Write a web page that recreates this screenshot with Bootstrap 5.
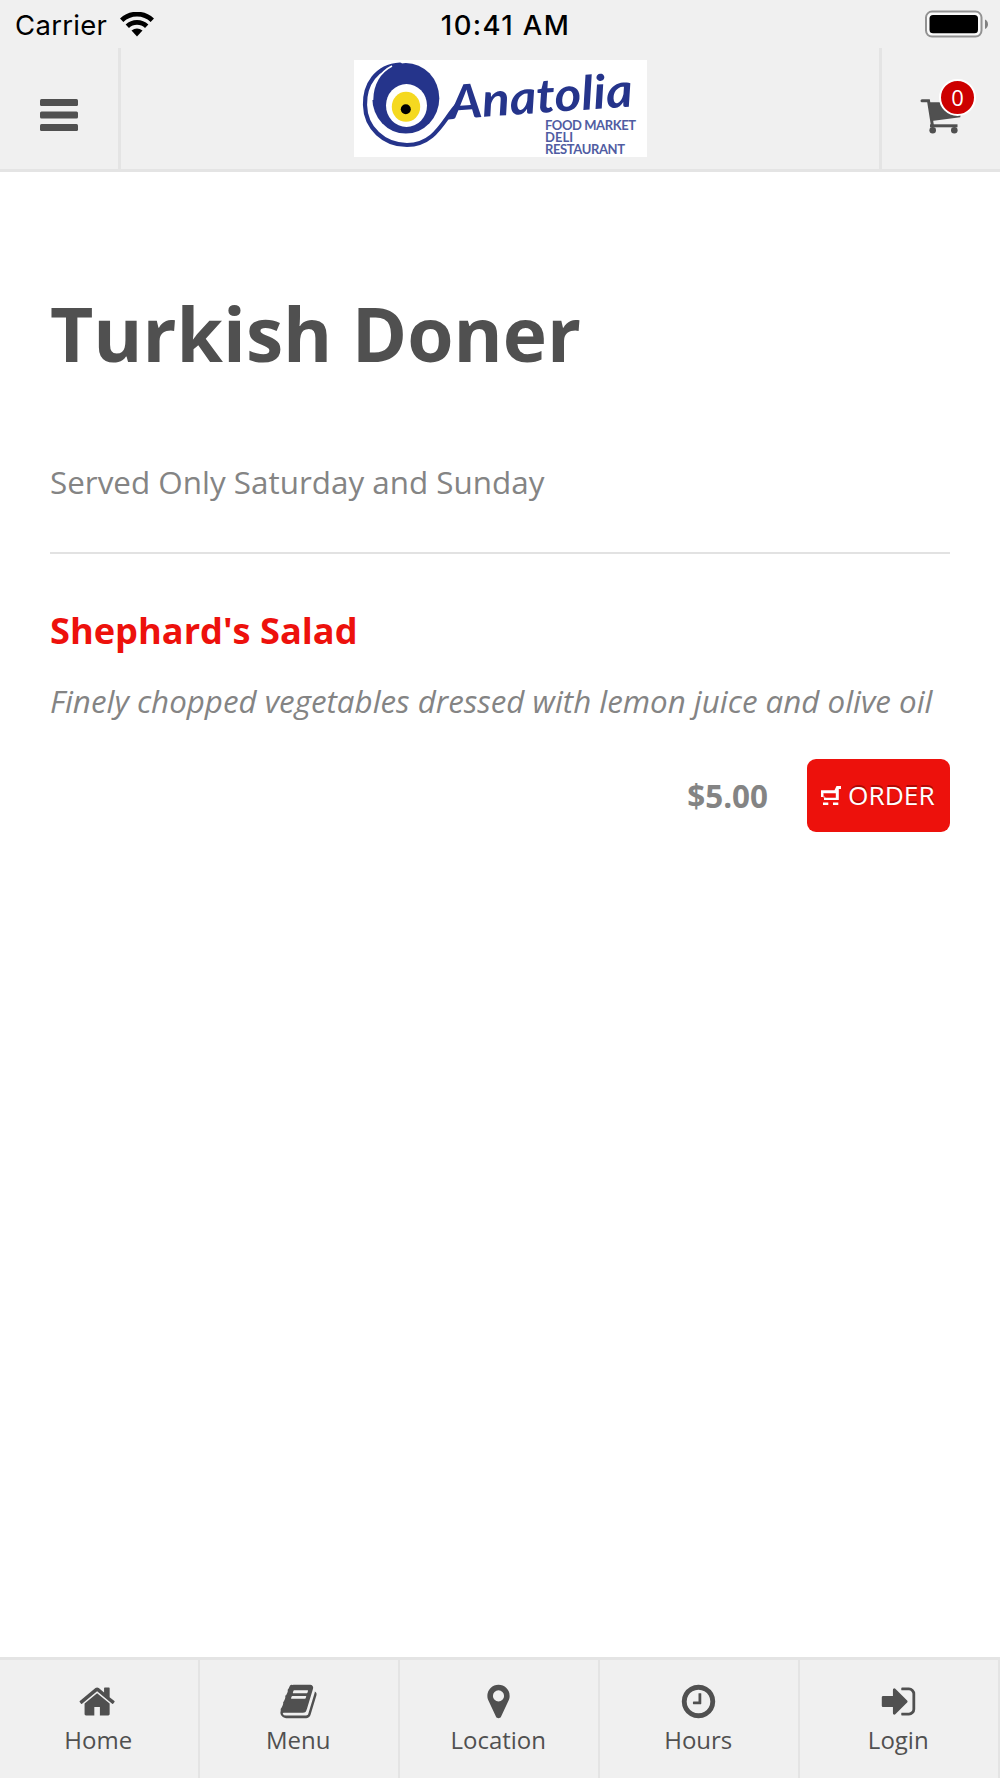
<!DOCTYPE html>
<html lang="en">
<head>
<meta charset="utf-8">
<meta name="viewport" content="width=device-width, initial-scale=1">
<title>Anatolia - Turkish Doner</title>
<link href="https://cdn.jsdelivr.net/npm/bootstrap@5.3.0/dist/css/bootstrap.min.css" rel="stylesheet">
<style>
  body { font-family: "Open Sans", sans-serif; color: #505050; background: #fff; }
  .app-screen { height: 1778px; overflow: hidden; }
  .bar-bg { background: #f0f0f0; }
  svg { display: block; }
  .status-bar { height: 48px; padding: 0 12px 0 15px; font-family: "Inter", sans-serif; font-size: 27.5px; line-height: 51px; color: #000; }
  .status-side { flex: 1 1 0; }
  .carrier-name { letter-spacing: .3px; }
  .wifi-icon { margin: 12px 0 0 13px; }
  .clock-text { font-weight: 500; margin-left: 8px; letter-spacing: 1.4px; }
  .app-header { height: 124px; border-bottom: 3px solid #e4e4e4; }
  .header-side { width: 121px; }
  .header-left { border-right: 3px solid #e4e4e4; padding: 51px 0 0 40px; }
  .header-right { border-left: 3px solid #e4e4e4; padding: 50px 0 0 38px; }
  .brand-logo { margin-top: 12px; }
  .cart-count { top: 31px; left: 57px; width: 37px; height: 37px; border: 2.5px solid #fff; background: #cd0000; font-size: 22px; line-height: 33px; font-weight: 400; padding: 0; color: #fff; }
  .page-title { font-size: 74.9px; line-height: 90px; font-weight: 700; margin: 0 0 83px; }
  .page-main { padding: 116px 50px 0; }
  .note-text { font-size: 31.4px; line-height: 42px; color: #848484; margin: 0 0 49px; }
  .rule-line { height: 2px; background: #e2e2e2; }
  .dish-name { font-size: 36.2px; line-height: 48px; font-weight: 700; color: #ed110c; margin: 52px 0 26px; }
  .dish-text { font-size: 31.3px; line-height: 42px; font-style: italic; color: #848484; margin: 0 0 37px; white-space: nowrap; }
  .dish-price { font-size: 31.4px; font-weight: 700; color: #848484; margin-right: 39px; }
  .btn-order, .btn-order:hover { width: 143px; height: 73px; border: 0; border-radius: 9px; background: #ed110c; color: #fff; font-size: 26.3px; padding: 0 0 0 14px; text-shadow: 0 -2px 0 rgba(90,0,0,.45); }
  .order-icon { margin-right: 7px; }
  .tab-bar { height: 121px; border-top: 3px solid #e4e4e4; }
  .tab-cell { width: 20%; border-right: 2px solid #e4e4e4; padding: 21.5px 1.5px 0 0; color: #505050; font-size: 24px; line-height: 32px; text-decoration: none; }
  .tab-cell svg { width: 39px; height: 39px; margin-bottom: 3px; fill: #505050; }
</style>
<script src="https://cdn.jsdelivr.net/npm/bootstrap@5.3.0/dist/js/bootstrap.bundle.min.js"></script>
</head>
<body>
<div class="app-screen d-flex flex-column">
  <div class="status-bar bar-bg d-flex">
    <div class="status-side d-flex">
      <span class="carrier-name">Carrier</span>
      <svg class="wifi-icon" width="34" height="25" viewBox="0 0 34 25">
        <g fill="none" stroke="#000" stroke-width="4.800"><path d="M1.700 8.300A22 22 0 0 1 32.300 8.300"/><path d="M7.300 14.200A14 14 0 0 1 26.700 14.200"/></g>
        <path d="M11.500 18.600Q17 14.300 22.500 18.600L17 24.500Z"/>
      </svg>
    </div>
    <span class="clock-text">10:41 AM</span>
    <div class="status-side d-flex justify-content-end">
      <svg class="mt-2" width="64" height="32" viewBox="0 0 64 32">
        <rect x="2" y="3.600" width="55.500" height="25" rx="6" fill="#fafafa" stroke="#929292" stroke-width="2"/>
        <rect x="5.500" y="7" width="48.500" height="18.200" rx="3.500"/>
        <path d="M61 11.500Q64 13 64 16.200Q64 19.500 61 21Z" fill="#808080"/>
      </svg>
    </div>
  </div>

  <header class="app-header bar-bg d-flex justify-content-between">
    <div class="header-side header-left">
      <svg width="38" height="32" viewBox="0 0 38 32" fill="#505050"><rect width="38" height="7" rx="1.500"/><rect y="12.500" width="38" height="7" rx="1.500"/><rect y="25" width="38" height="7" rx="1.500"/></svg>
    </div>
    <svg class="brand-logo" width="293" height="97" viewBox="0 0 293 97">
      <rect width="293" height="97" fill="#fff"/>
      <path d="M46 4.500C22 6 10.500 25 11 45C11.500 68 30 85 53 85C82 85 90 58 104 44" fill="none" stroke="#25348b" stroke-width="4.200" stroke-linecap="round"/>
      <ellipse cx="51.800" cy="38.300" rx="33.500" ry="35.300" fill="#25348b"/>
      <path d="M38 6C26 12 18.500 24 18.500 40" fill="none" stroke="#fff" stroke-width="1.600"/>
      <ellipse cx="52.500" cy="45.500" rx="20.500" ry="21.500" fill="#fff"/>
      <ellipse cx="52" cy="46.800" rx="14.200" ry="15" fill="#f5d920"/>
      <circle cx="51.800" cy="49.300" r="5" fill="#000"/>
      <g fill="#25348b" font-family="Lato, sans-serif">
        <text transform="rotate(-4 98 60)" x="96" y="59" textLength="184" lengthAdjust="spacingAndGlyphs" font-size="47" font-weight="700" font-style="italic">Anatolia</text>
        <text font-size="13" font-weight="700" opacity=".8"><tspan x="191" y="70" textLength="91">FOOD MARKET</tspan><tspan x="191" y="82" textLength="28">DELI</tspan><tspan x="191" y="94" textLength="80">RESTAURANT</tspan></text>
      </g>
    </svg>
    <div class="header-side header-right position-relative">
      <svg width="44" height="37" viewBox="0 0 44 37" fill="#505050">
        <path d="M2 2.700H8.500L12.500 28" fill="none" stroke="#505050" stroke-width="3" stroke-linecap="round"/>
        <path d="M8 4.300H42L40.300 19.300L11.700 23Z"/>
        <rect x="10" y="26.300" width="27.500" height="3"/>
        <circle cx="12.700" cy="32.300" r="3.300"/><circle cx="34.300" cy="32.300" r="3.300"/>
      </svg>
      <span class="cart-count badge rounded-circle position-absolute">0</span>
    </div>
  </header>

  <main class="page-main flex-grow-1">
    <h1 class="page-title">Turkish Doner</h1>
    <p class="note-text">Served Only Saturday and Sunday</p>
    <div class="rule-line"></div>
    <h2 class="dish-name">Shephard's Salad</h2>
    <p class="dish-text">Finely chopped vegetables dressed with lemon juice and olive oil</p>
    <div class="d-flex justify-content-end align-items-center">
      <span class="dish-price">$5.00</span>
      <button type="button" class="btn btn-order d-flex align-items-center">
        <svg class="order-icon" width="20" height="20" viewBox="0 0 20 20" fill="#fff">
          <path d="M15.500 0H20V3H17.800V14H3V11.800H14.800V7.300H2.200V11H0V4.300H13.500Z"/>
          <path d="M2.200 7.300V11H4V11.800" fill="none" stroke="#fff" stroke-opacity=".6"/>
          <rect x="2" y="16.500" width="5.300" height="2.500"/><rect x="12" y="16.500" width="5.300" height="2.500"/>
        </svg>
        <span>ORDER</span>
      </button>
    </div>
  </main>

  <nav class="tab-bar bar-bg d-flex text-center">
    <a class="tab-cell d-flex flex-column align-items-center" href="#">
      <svg viewBox="0 0 1792 1792"><path d="M1408 992v480q0 26-19 45t-45 19h-384v-384h-256v384h-384q-26 0-45-19t-19-45v-480q0-1 .5-3t.5-3l575-474 575 474q1 2 1 6zm223-69l-62 74q-8 9-21 11h-3q-13 0-21-7l-692-577-692 577q-12 8-24 7-13-2-21-11l-62-74q-8-10-7-23.500t11-21.500l719-599q32-26 76-26t76 26l244 204v-195q0-14 9-23t23-9h192q14 0 23 9t9 23v408l219 182q10 8 11 21.500t-7 23.500z"/></svg>
      <span>Home</span>
    </a>
    <a class="tab-cell d-flex flex-column align-items-center" href="#">
      <svg viewBox="0 0 1792 1792"><path d="M1703 478q40 57 18 129l-275 906q-19 64-76.500 107.500t-122.500 43.500h-923q-77 0-148.500-53.500t-99.500-131.500q-24-67-2-127 0-4 3-27t4-37q1-8-3-21.500t-3-19.500q2-11 8-21t16.500-23.500 16.500-23.500q23-38 45-91.500t30-91.500q3-10 .5-30t-.5-28q3-11 17-28t17-23q21-36 42-92t25-90q1-9-2.500-32t.5-28q4-13 22-30.500t22-22.500q19-26 42.500-84.500t27.500-96.500q1-8-3-25.500t-2-26.500q2-8 9-18t18-23 17-21q8-12 16.500-30.500t15-35 16-36 19.500-32 26.500-23.500 36-11.500 47.500 5.500l-1 3q38-9 51-9h761q74 0 114 56t18 130l-274 906q-36 119-71.500 153.500t-128.500 34.500h-869q-27 0-38 15-11 16-1 43 24 70 144 70h923q29 0 56-15.500t35-41.500l300-987q7-22 5-57 38 15 59 43zm-1064 2q-4 13 2 22.500t20 9.500h608q13 0 25.500-9.500t16.500-22.500l21-64q4-13-2-22.500t-20-9.500h-608q-13 0-25.500 9.500t-16.500 22.500zm-83 256q-4 13 2 22.500t20 9.500h608q13 0 25.500-9.500t16.500-22.500l21-64q4-13-2-22.500t-20-9.500h-608q-13 0-25.500 9.500t-16.500 22.500z"/></svg>
      <span>Menu</span>
    </a>
    <a class="tab-cell d-flex flex-column align-items-center" href="#">
      <svg viewBox="0 0 1792 1792"><path d="M1152 640q0-106-75-181t-181-75-181 75-75 181 75 181 181 75 181-75 75-181zm256 0q0 109-33 179l-364 774q-16 33-47.500 52t-67.500 19-67.500-19-46.500-52l-365-774q-33-70-33-179 0-212 150-362t362-150 362 150 150 362z"/></svg>
      <span>Location</span>
    </a>
    <a class="tab-cell d-flex flex-column align-items-center" href="#">
      <svg viewBox="0 0 1792 1792"><path d="M1024 544v448q0 14-9 23t-23 9h-320q-14 0-23-9t-9-23v-64q0-14 9-23t23-9h224v-352q0-14 9-23t23-9h64q14 0 23 9t9 23zm416 352q0-148-73-273t-198-198-273-73-273 73-198 198-73 273 73 273 198 198 273 73 273-73 198-198 73-273zm224 0q0 209-103 385.500t-279.500 279.500-385.500 103-385.500-103-279.500-279.500-103-385.500 103-385.500 279.500-279.500 385.500-103 385.500 103 279.500 279.500 103 385.500z"/></svg>
      <span>Hours</span>
    </a>
    <a class="tab-cell d-flex flex-column align-items-center" href="#">
      <svg viewBox="0 0 1792 1792"><path d="M1312 896q0 26-19 45l-544 544q-19 19-45 19t-45-19-19-45v-288h-448q-26 0-45-19t-19-45v-384q0-26 19-45t45-19h448v-288q0-26 19-45t45-19 45 19l544 544q19 19 19 45zm352-352v704q0 119-84.500 203.500t-203.500 84.500h-320q-13 0-22.500-9.500t-9.500-22.500q0-4-1-20t-.5-26.500 3-23.500 10-19.500 20.500-6.500h320q66 0 113-47t47-113v-704q0-66-47-113t-113-47h-312l-11.500-1-11.500-3-8-5.500-7-9-2-13.500q0-4-1-20t-.5-26.500 3-23.500 10-19.500 20.500-6.500h320q119 0 203.500 84.500t84.500 203.500z"/></svg>
      <span>Login</span>
    </a>
  </nav>
</div>
</body>
</html>
